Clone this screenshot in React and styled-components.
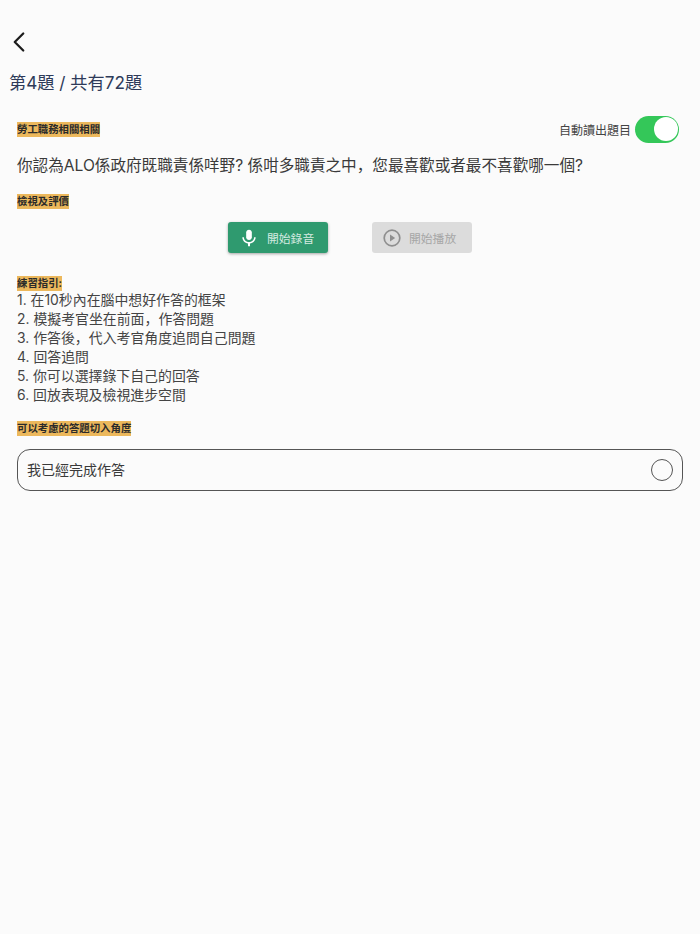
import React from "react";
import styled, { createGlobalStyle } from "styled-components";
import { ChevronLeft } from "lucide-react";

const GlobalStyle = createGlobalStyle`
  html, body {
    margin: 0;
    padding: 0;
    background: #fbfbfb;
  }
  body {
    font-family: Inter, "Noto Sans CJK SC", sans-serif;
  }
`;

const Page = styled.div`
  width: 700px;
  height: 934px;
  box-sizing: border-box;
  padding: 25px 17px 0 17px;
  background: #fbfbfb;
`;

const BackButton = styled.button`
  display: block;
  width: 34px;
  height: 34px;
  padding: 0;
  margin-left: -15px;
  border: 0;
  background: none;
  color: #1c1c1c;
`;

const Title = styled.h1`
  margin: 12px 0 0 -8px;
  font-size: 17.2px;
  line-height: 24px;
  font-weight: 400;
  color: #2e3a59;
`;

const TopRow = styled.div`
  display: flex;
  align-items: center;
  justify-content: space-between;
  margin-top: 19px;
  padding-right: 4px;
  height: 30px;
`;

const Tag = styled.span`
  display: inline-block;
  font-size: 10.4px;
  line-height: 15px;
  font-weight: 700;
  color: #2a2a2a;
  background: #ecb85c;
`;

const AutoRead = styled.label`
  display: flex;
  align-items: center;
  gap: 4px;
  font-size: 12px;
  color: #444;
`;

const Switch = styled.span`
  display: flex;
  justify-content: flex-end;
  align-items: center;
  box-sizing: border-box;
  width: 44px;
  height: 27px;
  padding: 1.5px;
  border-radius: 14px;
  background: #34c759;
`;

const Knob = styled.span`
  width: 24px;
  height: 24px;
  border-radius: 50%;
  background: #fff;
`;

const Question = styled.p`
  margin: 10px 0 0;
  font-size: 15.6px;
  line-height: 24px;
  color: #3a3a3a;
`;

const Section = styled.div`
  margin-top: ${(p) => p.$top}px;
  line-height: 15px;
  display: flex;
`;

const Actions = styled.div`
  display: flex;
  justify-content: center;
  gap: 44px;
  margin-top: 13px;
`;

const ActionButton = styled.button`
  display: flex;
  align-items: center;
  gap: 8px;
  width: 100px;
  height: 31px;
  padding: 0 0 0 11px;
  border: 0;
  border-radius: 3px;
  font-family: inherit;
  font-size: 11.8px;
  color: ${(p) => (p.disabled ? "#a6a6a6" : "#d5ebe1")};
  background: ${(p) => (p.disabled ? "#dcdcdc" : "#2f9a6f")};
  box-shadow: ${(p) => (p.disabled ? "none" : "0 1px 3px rgba(0,0,0,.35)")};
`;

const Guide = styled.ol`
  margin: 0;
  padding: 0;
  list-style: none;
  font-size: 13.9px;
  line-height: 19px;
  color: #444;
`;

const OptionRow = styled.div`
  display: flex;
  align-items: center;
  justify-content: space-between;
  box-sizing: border-box;
  width: 666px;
  height: 42px;
  margin-top: 13px;
  padding: 0 9px;
  border: 1.5px solid #555;
  border-radius: 13px;
  font-size: 14px;
  color: #3a3a3a;
`;

const OptionText = styled.span`
  padding-bottom: 2px;
`;

const Radio = styled.span`
  width: 22px;
  height: 22px;
  box-sizing: border-box;
  border: 1.5px solid #555;
  border-radius: 50%;
`;

const guideLines = [
  "1. 在10秒內在腦中想好作答的框架",
  "2. 模擬考官坐在前面，作答問題",
  "3. 作答後，代入考官角度追問自己問題",
  "4. 回答追問",
  "5. 你可以選擇錄下自己的回答",
  "6. 回放表現及檢視進步空間",
];

function MicIcon() {
  return (
    <svg width="20" height="20" viewBox="0 0 24 24" fill="#fff">
      <path d="M12 14.5c1.9 0 3.4-1.5 3.4-3.4V5.4C15.4 3.5 13.9 2 12 2S8.6 3.5 8.6 5.4v5.7c0 1.9 1.5 3.4 3.4 3.4z" />
      <path d="M18.1 11.1c0 3.4-2.9 5.8-6.1 5.8s-6.1-2.4-6.1-5.8H4c0 3.9 3.1 7 6.8 7.6V22h2.4v-3.3c3.7-.6 6.8-3.7 6.8-7.6h-1.9z" />
    </svg>
  );
}

function PlayIcon() {
  return (
    <svg width="18" height="18" viewBox="0 0 18 18" fill="none">
      <circle cx="9" cy="9" r="7.8" stroke="#8f8f8f" strokeWidth="1.7" />
      <path d="M7 5.6 12.2 9 7 12.4Z" fill="#8f8f8f" />
    </svg>
  );
}

export default function App() {
  return (
    <Page>
      <GlobalStyle />
      <BackButton aria-label="back">
        <ChevronLeft size={34} strokeWidth={1.6} />
      </BackButton>
      <Title>第4題 / 共有72題</Title>
      <TopRow>
        <Tag>勞工職務相關相關</Tag>
        <AutoRead>
          自動讀出題目
          <Switch>
            <Knob />
          </Switch>
        </AutoRead>
      </TopRow>
      <Question>你認為ALO係政府既職責係咩野? 係咁多職責之中，您最喜歡或者最不喜歡哪一個?</Question>
      <Section $top={16}>
        <Tag>檢視及評價</Tag>
      </Section>
      <Actions>
        <ActionButton>
          <MicIcon />
          開始錄音
        </ActionButton>
        <ActionButton disabled>
          <PlayIcon />
          開始播放
        </ActionButton>
      </Actions>
      <Section $top={23}>
        <Tag>練習指引:</Tag>
      </Section>
      <Guide>
        {guideLines.map((line) => (
          <li key={line}>{line}</li>
        ))}
      </Guide>
      <Section $top={16}>
        <Tag>可以考慮的答題切入角度</Tag>
      </Section>
      <OptionRow>
        <OptionText>我已經完成作答</OptionText>
        <Radio />
      </OptionRow>
    </Page>
  );
}
